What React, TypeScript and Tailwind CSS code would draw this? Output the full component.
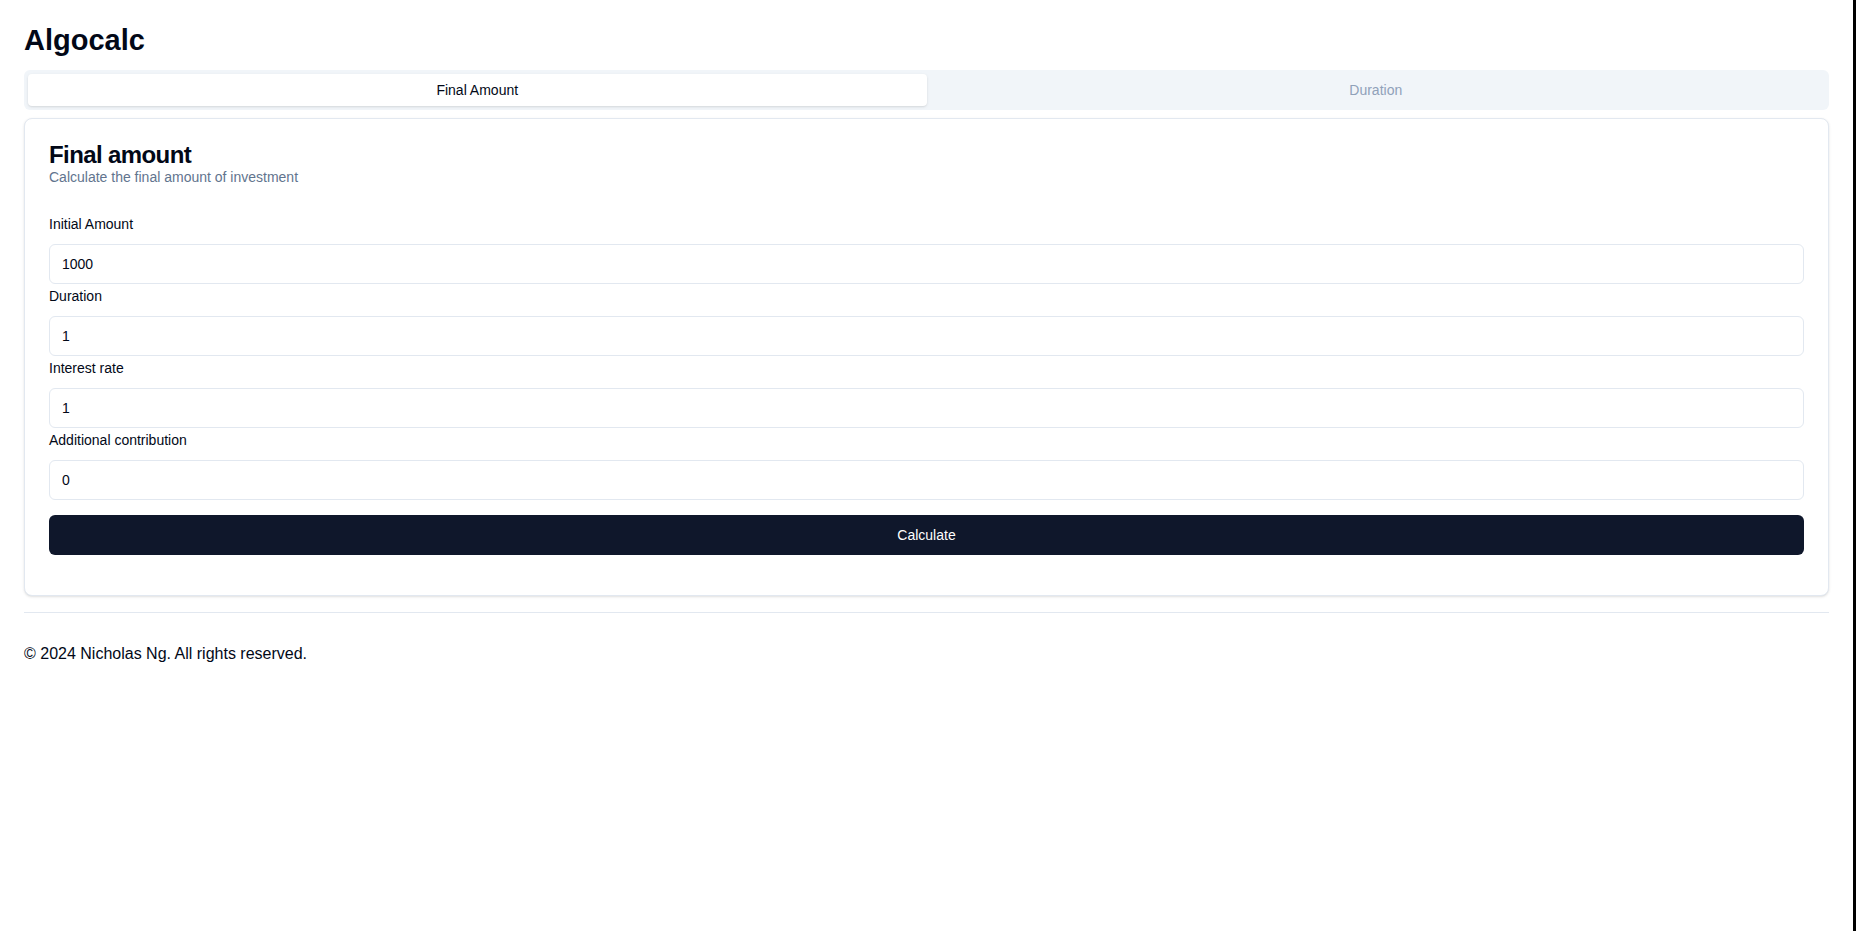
import { useState } from "react";

const fields = [
  { id: "initial", label: "Initial Amount", value: "1000" },
  { id: "duration", label: "Duration", value: "1" },
  { id: "rate", label: "Interest rate", value: "1" },
  { id: "contribution", label: "Additional contribution", value: "0" },
];

export default function App() {
  const [tab, setTab] = useState<"final" | "duration">("final");
  const [values, setValues] = useState<Record<string, string>>(
    Object.fromEntries(fields.map((f) => [f.id, f.value]))
  );

  return (
    <div className="flex min-h-screen bg-white font-['Liberation_Sans',Arial,sans-serif] text-[#020817]">
      <div className="flex-1 px-6 pt-[22px]">
        <h1 className="text-[29px] font-bold leading-9">Algocalc</h1>

        <div className="mt-3 grid h-10 grid-cols-2 rounded-md bg-slate-100 p-1">
          <button
            onClick={() => setTab("final")}
            className={
              tab === "final"
                ? "rounded-sm bg-white text-sm font-medium text-[#020817] shadow-sm"
                : "rounded-sm text-sm font-medium text-slate-400"
            }
          >
            Final Amount
          </button>
          <button
            onClick={() => setTab("duration")}
            className={
              tab === "duration"
                ? "rounded-sm bg-white text-sm font-medium text-[#020817] shadow-sm"
                : "rounded-sm text-sm font-medium text-slate-400"
            }
          >
            Duration
          </button>
        </div>

        <div className="mt-2 rounded-lg border border-slate-200 bg-white shadow-sm">
          <div className="px-6 pt-6">
            <h3 className="text-2xl font-semibold leading-none tracking-tight">Final amount</h3>
            <p className="text-sm leading-5 text-slate-500">Calculate the final amount of investment</p>
          </div>

          <form
            onSubmit={(e) => e.preventDefault()}
            className="flex flex-col gap-0.5 px-6 pb-10 pt-[27px]"
          >
            {fields.map((f) => (
              <div key={f.id} className="flex flex-col">
                <label htmlFor={f.id} className="block h-5 text-sm font-medium leading-5">
                  {f.label}
                </label>
                <input
                  id={f.id}
                  type="text"
                  value={values[f.id]}
                  onChange={(e) => setValues({ ...values, [f.id]: e.target.value })}
                  className="mt-2.5 h-10 w-full rounded-md border border-slate-200 bg-white px-3 py-2 text-sm text-[#020817] outline-none"
                />
              </div>
            ))}
            <button
              type="submit"
              className="mt-[13px] h-10 w-full rounded-md bg-slate-900 text-sm font-medium text-white"
            >
              Calculate
            </button>
          </form>
        </div>

        <hr className="mt-4 border-slate-200" />
        <footer className="pt-[29px] text-base leading-6">© 2024 Nicholas Ng. All rights reserved.</footer>
      </div>
      <div className="w-[3px] bg-black" />
    </div>
  );
}
